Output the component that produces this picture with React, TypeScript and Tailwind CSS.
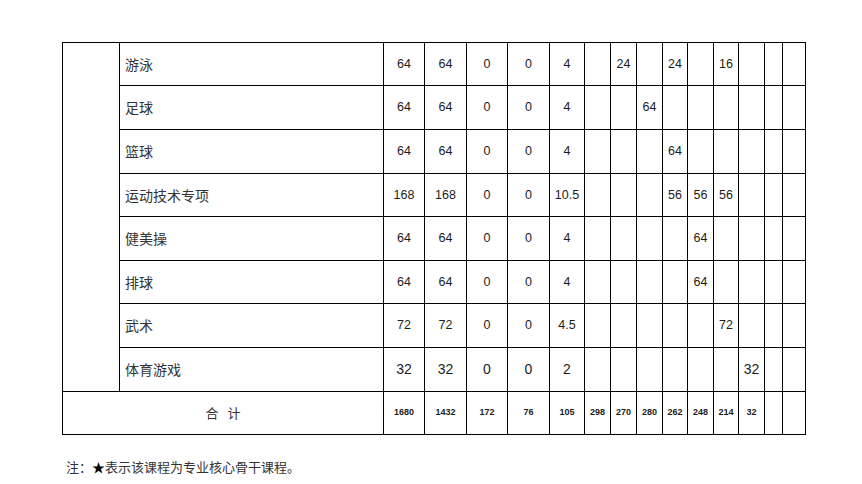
const cols = [57, 264, 41, 42, 41, 42, 35, 26, 26, 26, 25, 26, 25, 26, 18, 23];

interface CourseRow {
  name: string;
  values: string[];
  h: number;
  big?: boolean;
}

// 5 hour/credit columns + 9 term columns
const rows: CourseRow[] = [
  { name: "游泳", h: 43, values: ["64", "64", "0", "0", "4", "", "24", "", "24", "", "16", "", "", ""] },
  { name: "足球", h: 44, values: ["64", "64", "0", "0", "4", "", "", "64", "", "", "", "", "", ""] },
  { name: "篮球", h: 44, values: ["64", "64", "0", "0", "4", "", "", "", "64", "", "", "", "", ""] },
  { name: "运动技术专项", h: 43, values: ["168", "168", "0", "0", "10.5", "", "", "", "56", "56", "56", "", "", ""] },
  { name: "健美操", h: 44, values: ["64", "64", "0", "0", "4", "", "", "", "", "64", "", "", "", ""] },
  { name: "排球", h: 43, values: ["64", "64", "0", "0", "4", "", "", "", "", "64", "", "", "", ""] },
  { name: "武术", h: 44, values: ["72", "72", "0", "0", "4.5", "", "", "", "", "", "72", "", "", ""] },
  { name: "体育游戏", h: 44, big: true, values: ["32", "32", "0", "0", "2", "", "", "", "", "", "", "32", "", ""] },
];

const totals = ["1680", "1432", "172", "76", "105", "298", "270", "280", "262", "248", "214", "32", "", ""];

const cjk = "font-['Noto_Sans_CJK_SC',sans-serif]";
const num = "font-['Liberation_Sans',Arial,sans-serif]";

export default function App() {
  return (
    <div className="w-[862px] h-[484px] bg-white pt-[42px] pl-[62px] text-[#1c1c1c]">
      <table className="table-fixed border-collapse w-[744px]">
        <colgroup>
          {cols.map((w, i) => (
            <col key={i} style={{ width: w }} />
          ))}
        </colgroup>
        <tbody>
          {rows.map((r, ri) => (
            <tr key={r.name} style={{ height: r.h }}>
              {ri === 0 && <td rowSpan={rows.length} className="border border-black p-0" />}
              <td className={`border border-black pl-[5px] text-left text-[14px] text-[#333] ${cjk}`}>{r.name}</td>
              {r.values.map((v, i) => (
                <td
                  key={i}
                  className={`border border-black p-0 text-center ${num} ${r.big ? "text-[14px]" : "text-[12.5px]"}`}
                >
                  {v}
                </td>
              ))}
            </tr>
          ))}
          <tr className="h-[43px]">
            <td colSpan={2} className={`border border-black p-0 text-center text-[13px] text-[#333] ${cjk}`}>
              <span className="mr-[9px]">合</span>
              <span>计</span>
            </td>
            {totals.map((v, i) => (
              <td key={i} className={`border border-black p-0 text-center text-[9px] font-bold ${num}`}>
                {v}
              </td>
            ))}
          </tr>
        </tbody>
      </table>
      <p className={`mt-[22px] pl-[4px] text-[13px] leading-[20px] text-[#333] ${cjk}`}>
        注：<span className="text-black">★</span>表示该课程为专业核心骨干课程。
      </p>
    </div>
  );
}
